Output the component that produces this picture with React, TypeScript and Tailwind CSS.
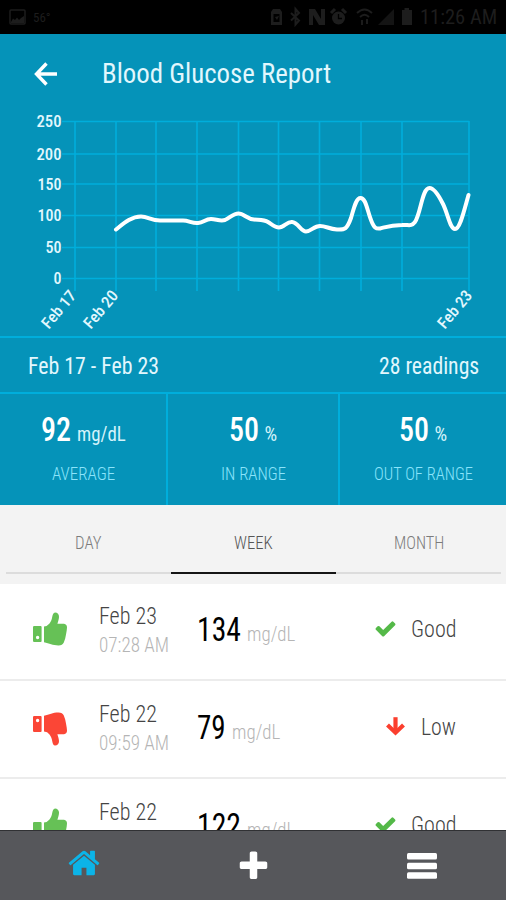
import { useLayoutEffect, useRef, useState } from "react";
import type { ReactNode } from "react";

/* Single line of type squeezed horizontally to a fixed measure. */
function Fit({ w, className = "", children }: { w: number; className?: string; children: ReactNode }) {
  const ref = useRef<HTMLSpanElement>(null);
  const [scale, setScale] = useState(1);
  useLayoutEffect(() => {
    if (ref.current) setScale(w / ref.current.offsetWidth);
  }, [w, children]);
  return (
    <span className={`block shrink-0 whitespace-nowrap leading-none ${className}`} style={{ width: w }}>
      <span ref={ref} className="inline-block origin-left" style={{ transform: `scaleX(${scale})` }}>
        {children}
      </span>
    </span>
  );
}

function ThumbUp({ className = "" }: { className?: string }) {
  return (
    <svg viewBox="0 0 34 34" className={`h-[34px] w-[34px] shrink-0 ${className}`} fill="currentColor">
      <path
        fillRule="evenodd"
        d="M1.2 14H7.6Q8.6 14 8.6 15V29Q8.6 30 7.6 30H1.2Q0 30 0 29V15Q0 14 1.2 14ZM4.6 23.8A1.7 1.7 0 1 0 4.6 27.2A1.7 1.7 0 1 0 4.6 23.8Z"
      />
      <path d="M11 14.500Q14.500 14.300 16.500 11.600C18.300 9.200 18.800 7.400 19.300 4.600C19.800 2 20.500.8 22 .5C24.500.5 26.200 2.400 26 5C25.900 7.600 25 9.500 24.400 11.800H31Q34 12.200 34 15.500L33.700 18.500L33 22.500L32.200 26.500L30.800 30.500Q29.500 33.400 25.500 33.400C19.500 33.400 16.500 31.300 11 30.300Z" />
    </svg>
  );
}

function Check() {
  return (
    <svg viewBox="0 0 1792 1792" className="h-[23px] w-[23px] shrink-0 text-[#54b948]" fill="currentColor">
      <path d="M1671 566q0 40-28 68l-724 724-136 136q-28 28-68 28t-68-28l-136-136-362-362q-28-28-28-68t28-68l136-136q28-28 68-28t68 28l294 295 656-657q28-28 68-28t68 28l136 136q28 28 28 68z" />
    </svg>
  );
}

function ArrowDown() {
  return (
    <svg viewBox="0 0 23 23" className="h-[23px] w-[23px] shrink-0 text-[#fb3f2e]" fill="none" stroke="currentColor" strokeWidth="4.2">
      <path d="M11.500 2.200V17" />
      <path d="M3.500 10L11.500 17.700L19.500 10" strokeLinejoin="miter" />
    </svg>
  );
}

const gridX = [75, 116, 156, 197, 238.5, 278.5, 319.5, 361, 402, 469];
const gridY = [121.5, 154, 184, 215.5, 247.5, 278.5];
const yLabels = [
  { t: "250", w: 25 },
  { t: "200", w: 25 },
  { t: "150", w: 24 },
  { t: "100", w: 24 },
  { t: "50", w: 16 },
  { t: "0", w: 8 },
];
const xLabels = [
  { t: "Feb 17", x: 77 },
  { t: "Feb 20", x: 119 },
  { t: "Feb 23", x: 473 },
];

function Chart() {
  return (
    <svg viewBox="0 114 506 222" className="block h-[222px] w-[506px] overflow-visible">
      <g stroke="#00aedc" strokeWidth="1.6">
        {gridX.map((x) => (
          <line key={x} x1={x} x2={x} y1="121" y2="291" />
        ))}
        {gridY.map((y) => (
          <line key={y} x1="62" x2="469" y1={y} y2={y} />
        ))}
      </g>
      <g fill="#e2f7fd" fontSize="17" fontWeight="500" textAnchor="end">
        {yLabels.map((l, i) => (
          <text key={l.t} x="61.500" y={gridY[i] + 5.5} textLength={l.w} lengthAdjust="spacingAndGlyphs">
            {l.t}
          </text>
        ))}
        {xLabels.map((l) => (
          <text key={l.t} transform={`translate(${l.x} 296) rotate(-50)`} textLength="44" lengthAdjust="spacingAndGlyphs" fontSize="16">
            {l.t}
          </text>
        ))}
      </g>
      <path
        d="M116 229.500C123 224 131 216.500 141 216.500C148 216.500 151 220.500 160 220.500H183C189 220.500 192 223.500 198 223C204 222.500 205 219 211 219C216 219 220 221.500 225 220C230 218 233 213.500 238.500 213.500C244 213.500 247 219 254 219.500C260 220 264 219.500 268 222C272 224.500 275 227.500 279 227.500C284 227.500 287 221.500 292 222C298 222.500 301 231.500 306 231.500C311 231.500 314 226 320 226C326 226 329 229 337 229.500C345 230 347 229 351 218C354 208 356 198 360.500 198C366 198 367 210 371 220C374 228 376 229 380 228.500C386 227 391 225 402 225C409 224.500 411 227 415 222C421 213 422 188 429.500 188C434 188 439 196 443 204C448 214 450 229 455 229C460 229 464 211 468.500 195"
        fill="none"
        stroke="#fff"
        strokeWidth="4"
        strokeLinecap="round"
        strokeLinejoin="round"
      />
    </svg>
  );
}

function StatusBar() {
  return (
    <div className="flex h-[34px] shrink-0 items-center bg-black pr-[9px] pl-[9px] text-[#1d1d1d]">
      <svg viewBox="0 0 17 16" className="mr-[7px] h-4 w-[17px]" fill="none" stroke="currentColor" strokeWidth="1.500">
        <rect x="1" y="1" width="15" height="14" rx="1" />
        <path d="M2 13L4 9.500L6 11L8 8.500L10 11L12 9L15 7V14H2Z" fill="currentColor" stroke="none" />
      </svg>
      <Fit w={18} className="text-[13px]">56°</Fit>
      <svg viewBox="270 0 144 34" className="ml-auto h-[34px] w-[144px]" fill="currentColor">
        <path fillRule="evenodd" d="M273 9H280L282 12V25H271V12ZM273.500 14V22H279.500V14ZM275 17L277 20L279 16" />
        <path d="M291 13L299 20.500L295.500 24.500V9L299 13L291 20.500" fill="none" stroke="currentColor" strokeWidth="2" />
        <path fillRule="evenodd" d="M309 9H315L321 19V9H325V25H319L313 15V25H309Z" />
        <circle cx="338.500" cy="18" r="6.500" />
        <path d="M331 13L335 9M346 13L342 9" stroke="currentColor" strokeWidth="3" />
        <path d="M338.500 14V18.500H342" fill="none" stroke="#000" strokeWidth="1.300" />
        <path d="M357 13Q364.500 6 372 13M360 17Q364.500 12.500 369 17M362 25V20M367 19V24" fill="none" stroke="currentColor" strokeWidth="1.900" />
        <path d="M394 9V25H378Z" className="text-[#141414]" />
        <path d="M402 10H404.500V8H409V10H412V25H402Z" />
      </svg>
      <Fit w={77} className="ml-[6px] pt-px text-[21px]">11:26 AM</Fit>
    </div>
  );
}

function Stat({ value, vw, unit, uw, us, label, lw, className }: { value: string; vw: number; unit: string; uw: number; us: string; label: string; lw: number; className: string }) {
  return (
    <div className={`flex flex-col items-center pt-[19px] ${className}`}>
      <div className="flex items-baseline gap-[6px]">
        <Fit w={vw} className="text-[33px] font-medium text-white">{value}</Fit>
        <Fit w={uw} className={`${us} text-[#d5f3fb]`}>{unit}</Fit>
      </div>
      <Fit w={lw} className="mt-[20px] text-[17.500px] font-light text-[#8be4fb]">{label}</Fit>
    </div>
  );
}

function Tab({ label, w, active = false }: { label: string; w: number; active?: boolean }) {
  return (
    <div className={`flex h-[69px] flex-1 justify-center border-b-2 pt-[29px] ${active ? "border-[#151515] text-[#555]" : "border-[#dcdcdc] text-[#7c7c7c]"}`}>
      <Fit w={w} className="text-[18px] font-light">{label}</Fit>
    </div>
  );
}

type Reading = { date: string; time?: string; value: string; vw: number; good: boolean };

function Row({ date, time, value, vw, good }: Reading) {
  return (
    <div className="flex h-[98px] shrink-0 items-start border-b-2 border-[#ececec] pr-[50px] pl-[33px]">
      {good ? (
        <ThumbUp className="mt-[29px] text-[#66c156]" />
      ) : (
        <ThumbUp className="mt-[31px] -scale-y-100 text-[#fb4636]" />
      )}
      <div className="ml-[32px] flex w-[98px] flex-col pt-[21px]">
        <Fit w={58} className="text-[24px] font-light text-[#444]">{date}</Fit>
        {time && <Fit w={70} className="mt-[7px] text-[21px] font-light text-[#b5b5b5]">{time}</Fit>}
      </div>
      <div className="flex items-baseline gap-[6px] pt-[30px]">
        <Fit w={vw} className="text-[33px] text-black">{value}</Fit>
        <Fit w={48} className="text-[20.500px] font-light text-[#b5b5b5]">mg/dL</Fit>
      </div>
      <div className="ml-auto flex items-start gap-[14px] pt-[34px]">
        {good ? <Check /> : <ArrowDown />}
        <Fit w={good ? 45 : 35} className="mt-px text-[23px] font-light text-[#444]">{good ? "Good" : "Low"}</Fit>
      </div>
    </div>
  );
}

const readings: Reading[] = [
  { date: "Feb 23", time: "07:28 AM", value: "134", vw: 44, good: true },
  { date: "Feb 22", time: "09:59 AM", value: "79", vw: 29, good: false },
  { date: "Feb 22", value: "122", vw: 44, good: true },
];

export default function App() {
  return (
    <div className="flex h-[900px] w-[506px] flex-col overflow-hidden bg-white font-['Roboto_Condensed','Roboto',sans-serif] [font-stretch:75%]">
      <StatusBar />
      <div className="shrink-0 bg-[#0593b9]">
        <header className="flex h-[80px] items-center pl-[34px]">
          <svg viewBox="0 0 24 24" className="h-6 w-6" fill="none" stroke="#fff" strokeWidth="3.400">
            <path d="M12.500 1.500L2.500 12L12.500 22.500M2.500 12H23" />
          </svg>
          <Fit w={229} className="ml-[44px] text-[28px] text-[#e2f7fd]">Blood Glucose Report</Fit>
        </header>
        <Chart />
        <div className="flex h-[58px] items-center justify-between border-y-2 border-[#00aedc] pr-[27px] pl-[28px] text-[23px] text-[#e2f7fd]">
          <Fit w={131} className="pt-[2px]">Feb 17 - Feb 23</Fit>
          <Fit w={100} className="pt-[2px]">28 readings</Fit>
        </div>
        <div className="flex h-[111px]">
          <Stat value="92" vw={30} unit="mg/dL" uw={49} us="text-[20px]" label="AVERAGE" lw={63} className="w-[166px]" />
          <Stat value="50" vw={30} unit="%" uw={13} us="text-[20px]" label="IN RANGE" lw={65} className="w-[172px] border-l-2 border-[#00aedc]" />
          <Stat value="50" vw={30} unit="%" uw={13} us="text-[20px]" label="OUT OF RANGE" lw={99} className="w-[168px] border-l-2 border-[#00aedc]" />
        </div>
      </div>
      <div className="flex h-[78px] shrink-0 bg-[#f3f3f3] pr-[5px] pl-[6px]">
        <Tab label="DAY" w={27} />
        <Tab label="WEEK" w={39} active />
        <Tab label="MONTH" w={50} />
      </div>
      <div className="flex h-[247px] shrink-0 flex-col overflow-hidden border-t border-[#f3f3f3]">
        <div className="-mt-px flex flex-col">
          {readings.map((r) => (
            <Row key={r.value} {...r} />
          ))}
        </div>
      </div>
      <nav className="flex h-[70px] shrink-0 border-t border-[#303134] bg-[#56575b] text-white">
        <div className="flex flex-1 justify-center pt-[15px] text-[#0cb4e8]">
          <svg viewBox="0 0 1792 1792" className="h-[34px] w-[34px]" fill="currentColor">
            <path d="M1472 992v480q0 26-19 45t-45 19h-384v-384h-256v384h-384q-26 0-45-19t-19-45v-480q0-1 .5-3t.5-3l575-474 575 474q1 2 1 6zm223-69l-62 74q-8 9-21 11h-3q-13 0-21-7l-692-577-692 577q-12 8-24 7-13-2-21-11l-62-74q-8-10-7-23.500t11-21.500l719-599q32-26 76-26t76 26l244 204v-195q0-14 9-23t23-9h192q14 0 23 9t9 23v408l219 182q10 8 11 21.500t-7 23.500z" />
          </svg>
        </div>
        <div className="flex flex-1 justify-center pt-[18px]">
          <svg viewBox="0 0 1792 1792" className="h-[35px] w-[35px]" fill="currentColor">
            <path d="M1600 736v192q0 40-28 68t-68 28h-416v416q0 40-28 68t-68 28h-192q-40 0-68-28t-28-68v-416h-416q-40 0-68-28t-28-68v-192q0-40 28-68t68-28h416v-416q0-40 28-68t68-28h192q40 0 68 28t28 68v416h416q40 0 68 28t28 68z" />
          </svg>
        </div>
        <div className="flex flex-1 justify-center pt-[22px]">
          <svg viewBox="0 0 30 26" className="h-[26px] w-[30px]" fill="currentColor">
            <rect y="0" width="30" height="6.500" rx="1.500" />
            <rect y="9.700" width="30" height="6.500" rx="1.500" />
            <rect y="19.300" width="30" height="6.500" rx="1.500" />
          </svg>
        </div>
      </nav>
    </div>
  );
}
